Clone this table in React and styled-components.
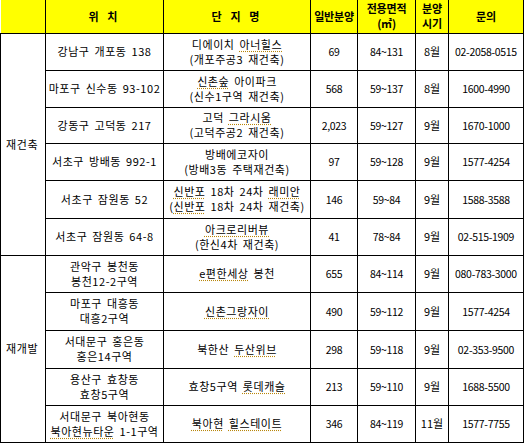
import React from "react";
import styled, { createGlobalStyle } from "styled-components";

const Global = createGlobalStyle`
  html, body { margin: 0; padding: 0; background: #fff; }
  body { font-family: "Noto Sans CJK KR", "Noto Sans", sans-serif; color: #000; }
`;

const Table = styled.table`
  border-collapse: collapse;
  table-layout: fixed;
  width: 523px;
  font-size: 11px;
  line-height: 15px;
`;

const HeadCell = styled.th`
  background: #ffff00;
  border: 1px solid #000;
  border-top: none;
  font-weight: 700;
  font-size: 11px;
  line-height: 15px;
  text-align: center;
  padding: 0;
  white-space: nowrap;
  letter-spacing: ${(p) => (p.$spaced ? "0.28em" : "-0.02em")};
  &:first-child { border-left: none; }
`;

const HeadLine = styled.div`
  line-height: 15px;
`;

const HeadRow = styled.tr`
  height: 33px;
`;

const Row = styled.tr`
  height: ${(p) => p.$h}px;
`;

const Cell = styled.td`
  border: 1px solid #000;
  text-align: center;
  vertical-align: middle;
  padding: 0;
  white-space: nowrap;
  letter-spacing: ${(p) => (p.$wide ? "0.05em" : "0")};
  word-spacing: ${(p) => (p.$wide ? "2px" : "0")};
`;

const NumCell = styled(Cell)`
  font-size: 10.5px;
  letter-spacing: -0.03em;
`;

const GroupCell = styled(Cell)`
  text-align: left;
  padding-left: 5px;
  letter-spacing: 0.06em;
`;

const Marked = styled.span`
  text-decoration: underline dotted #b8860b;
  text-underline-offset: 2px;
`;

const Line = styled.div``;

const M = ({ children }) => <Marked>{children}</Marked>;

const rows = [
  { group: "재건축", span: 6, loc: ["강남구 개포동 138"], name: [<><span>디에이치 </span><M>아너힐스</M></>, "(개포주공3 재건축)"], n: "69", area: "84~131", when: "8월", tel: "02-2058-0515" },
  { loc: ["마포구 신수동 93-102"], name: [<><M>신촌숲</M> 아이파크</>, "(신수1구역 재건축)"], n: "568", area: "59~137", when: "8월", tel: "1600-4990" },
  { loc: ["강동구 고덕동 217"], name: [<>고덕 <M>그라시움</M></>, "(고덕주공2 재건축)"], n: "2,023", area: "59~127", when: "9월", tel: "1670-1000" },
  { loc: ["서초구 방배동 992-1"], name: ["방배에코자이", "(방배3동 주택재건축)"], n: "97", area: "59~128", when: "9월", tel: "1577-4254" },
  { loc: ["서초구 잠원동 52"], name: [<><M>신반포</M> 18차 24차 <M>래미안</M></>, <>(<M>신반포</M> 18차 24차 재건축)</>], n: "146", area: "59~84", when: "9월", tel: "1588-3588" },
  { loc: ["서초구 잠원동 64-8"], name: [<M>아크로리버뷰</M>, "(한신4차 재건축)"], n: "41", area: "78~84", when: "9월", tel: "02-515-1909" },
  { group: "재개발", span: 5, loc: ["관악구 봉천동", "봉천12-2구역"], name: [<><M>e편한세상</M> 봉천</>], n: "655", area: "84~114", when: "9월", tel: "080-783-3000" },
  { loc: ["마포구 대흥동", "대흥2구역"], name: [<M>신촌그랑자이</M>], n: "490", area: "59~112", when: "9월", tel: "1577-4254" },
  { loc: ["서대문구 홍은동", "홍은14구역"], name: [<>북한산 <M>두산위브</M></>], n: "298", area: "59~118", when: "9월", tel: "02-353-9500" },
  { loc: ["용산구 효창동", "효창5구역"], name: [<>효창5구역 <M>롯데캐슬</M></>], n: "213", area: "59~110", when: "9월", tel: "1688-5500" },
  { loc: ["서대문구 북아현동", <><M>북아현뉴타운</M> 1-1구역</>], name: [<><M>북아현</M> <M>힐스테이트</M></>], n: "346", area: "84~119", when: "11월", tel: "1577-7755" },
];

const heights = [37, 37, 36, 37, 38, 37, 37, 38, 38, 37, 37];

export default function App() {
  return (
    <>
      <Global />
      <Table>
        <colgroup>
          <col style={{ width: 45 }} />
          <col style={{ width: 118 }} />
          <col style={{ width: 147 }} />
          <col style={{ width: 47 }} />
          <col style={{ width: 58 }} />
          <col style={{ width: 33 }} />
          <col style={{ width: 75 }} />
        </colgroup>
        <thead>
          <HeadRow>
            <HeadCell />
            <HeadCell $spaced>위 치</HeadCell>
            <HeadCell $spaced>단 지 명</HeadCell>
            <HeadCell>일반분양</HeadCell>
            <HeadCell><HeadLine>전용면적</HeadLine><HeadLine>(㎡)</HeadLine></HeadCell>
            <HeadCell><HeadLine>분양</HeadLine><HeadLine>시기</HeadLine></HeadCell>
            <HeadCell>문의</HeadCell>
          </HeadRow>
        </thead>
        <tbody>
          {rows.map((r, i) => (
            <Row key={i} $h={heights[i]}>
              {r.group && <GroupCell rowSpan={r.span}>{r.group}</GroupCell>}
              <Cell $wide>{r.loc.map((l, j) => <Line key={j}>{l}</Line>)}</Cell>
              <Cell $wide>{r.name.map((l, j) => <Line key={j}>{l}</Line>)}</Cell>
              <NumCell>{r.n}</NumCell>
              <NumCell>{r.area}</NumCell>
              <Cell>{r.when}</Cell>
              <NumCell>{r.tel}</NumCell>
            </Row>
          ))}
        </tbody>
      </Table>
    </>
  );
}
